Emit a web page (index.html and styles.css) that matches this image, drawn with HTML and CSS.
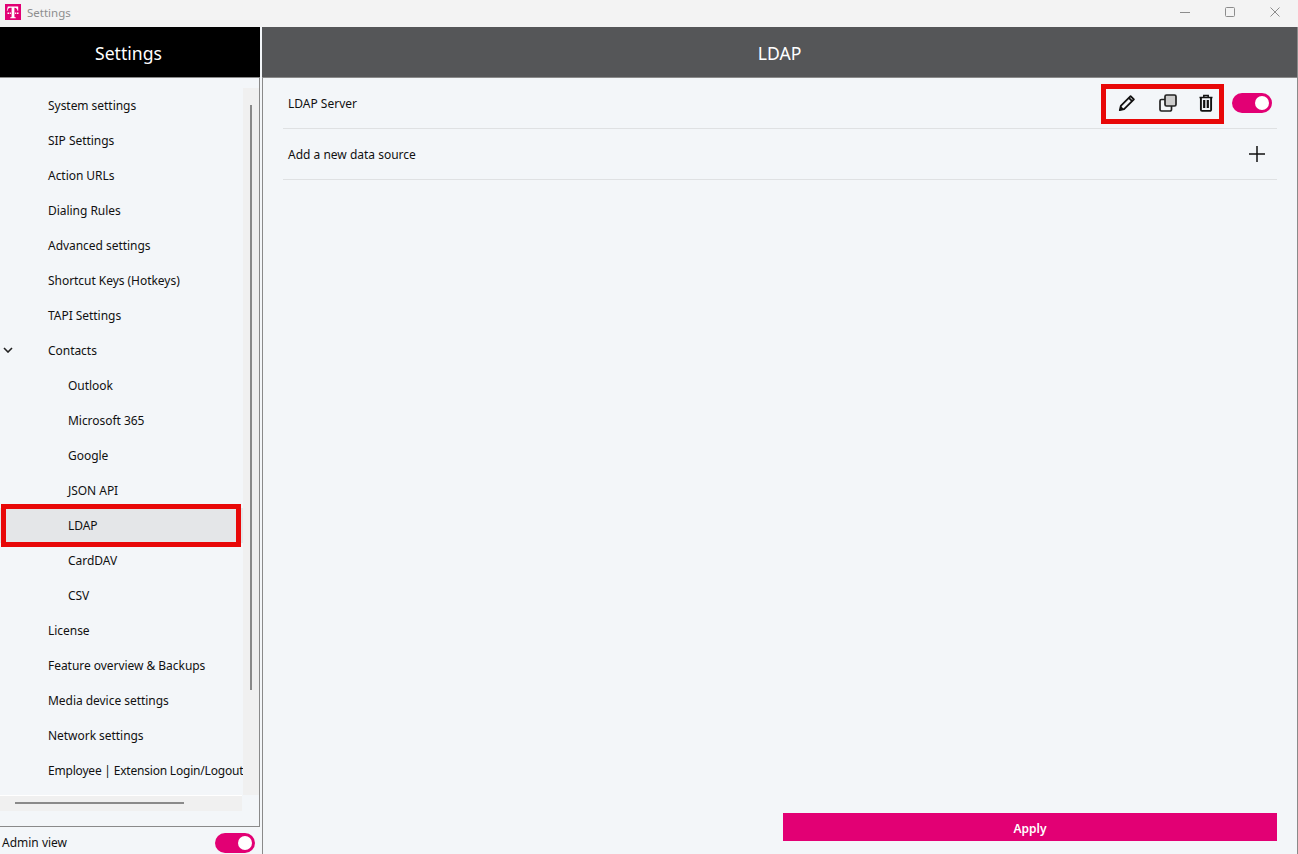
FILE: index.html
```html
<!DOCTYPE html>
<html lang="en">
<head>
<meta charset="utf-8">
<title>Settings</title>
<link rel="stylesheet" href="styles.css">
</head>
<body>
<div class="app">
  <div class="titlebar">
    <div class="logo">
      <svg width="16" height="16" viewBox="0 0 16 16"><rect width="16" height="16" fill="#e20074"/><path d="M2.800 2.500h10.400v4.300h-.8c0-1.700-.9-2.900-2.800-3H9.400v8.400c0 .9.300 1.100 1.300 1.100v.9H5.300v-.9c1 0 1.300-.2 1.300-1.100V3.800H5.400c-1.900.1-2.800 1.300-2.800 3h-.8z" fill="#fff"/><rect x="2.500" y="8.500" width="1.500" height="1.500" fill="#fff"/><rect x="4.700" y="8.500" width="1.200" height="1.500" fill="#fff"/><rect x="10.100" y="8.500" width="1.200" height="1.500" fill="#fff"/><rect x="12" y="8.500" width="1.500" height="1.500" fill="#fff"/></svg>
    </div>
    <span class="app-title">Settings</span>
    <div class="win-controls">
      <svg class="win-btn" width="12" height="12" viewBox="0 0 12 12"><path d="M1 6.500h10" stroke="#8c8c8c" fill="none"/></svg>
      <svg class="win-btn" width="12" height="12" viewBox="0 0 12 12"><rect x="1.500" y="1.500" width="9" height="9" rx="1" stroke="#8c8c8c" fill="none"/></svg>
      <svg class="win-btn" width="12" height="12" viewBox="0 0 12 12"><path d="M1.500 1.500l9 9M10.500 1.500l-9 9" stroke="#8c8c8c" fill="none"/></svg>
    </div>
  </div>
  <div class="content">
    <aside class="sidebar">
      <div class="side-head">Settings</div>
      <div class="side-panel">
        <div class="side-scroll">
          <nav class="nav">
            <div class="nav-item">System settings</div>
            <div class="nav-item">SIP Settings</div>
            <div class="nav-item">Action URLs</div>
            <div class="nav-item">Dialing Rules</div>
            <div class="nav-item">Advanced settings</div>
            <div class="nav-item">Shortcut Keys (Hotkeys)</div>
            <div class="nav-item">TAPI Settings</div>
            <div class="nav-item has-caret">
              <svg class="caret" width="10" height="6" viewBox="0 0 10 6"><path d="M1 1l4 4 4-4" stroke="#222" stroke-width="1.600" fill="none"/></svg>
              Contacts
            </div>
            <div class="nav-item sub">Outlook</div>
            <div class="nav-item sub">Microsoft 365</div>
            <div class="nav-item sub">Google</div>
            <div class="nav-item sub">JSON API</div>
            <div class="nav-item sub active">LDAP<span class="mark mark-nav"></span></div>
            <div class="nav-item sub">CardDAV</div>
            <div class="nav-item sub">CSV</div>
            <div class="nav-item">License</div>
            <div class="nav-item">Feature overview &amp; Backups</div>
            <div class="nav-item">Media device settings</div>
            <div class="nav-item">Network settings</div>
            <div class="nav-item tight">Employee | Extension Login/Logout</div>
          </nav>
          <div class="vtrack"><div class="vthumb"></div></div>
        </div>
        <div class="htrack"><div class="hthumb"></div></div>
      </div>
      <div class="admin">
        <span>Admin view</span>
        <span class="toggle"></span>
      </div>
    </aside>
    <main class="main">
      <div class="main-head">LDAP</div>
      <div class="main-body">
        <div class="row">
          <span>LDAP Server</span>
          <div class="row-actions">
            <div class="icons">
              <svg width="18" height="18" viewBox="0 0 18 18"><path d="M1.800 16.200l1-4.300L12.600 2.100l3.300 3.300-9.800 9.800z" fill="none" stroke="#111" stroke-width="1.800" stroke-linejoin="round"/><path d="M10.800 3.900l3.300 3.300" stroke="#111" stroke-width="1.800" fill="none"/><path d="M1.800 16.200l1-4.300 3.300 3.300z" fill="#111"/></svg>
              <svg width="18" height="18" viewBox="0 0 18 18"><rect x="6" y="1" width="11" height="11" rx="1.500" fill="#ccc" stroke="#222" stroke-width="1.700"/><path d="M6 5.500H2.500A1.500 1.500 0 0 0 1 7v8.500A1.500 1.500 0 0 0 2.500 17H11a1.500 1.500 0 0 0 1.500-1.500V12" fill="none" stroke="#222" stroke-width="1.700"/></svg>
              <svg width="14" height="18" viewBox="0 0 14 18"><path d="M.5 3.500h13M4.800 3.500V1.500h4.400v2" fill="none" stroke="#111" stroke-width="1.500"/><path d="M1.900 3.500v12.200a1.200 1.200 0 0 0 1.200 1.200h7.800a1.200 1.200 0 0 0 1.200-1.200V3.500" fill="none" stroke="#111" stroke-width="1.900"/><path d="M5.200 6v8M8.800 6v8" stroke="#111" stroke-width="2.200" fill="none"/></svg>
              <span class="mark mark-icons"></span>
            </div>
            <span class="toggle"></span>
          </div>
        </div>
        <div class="row">
          <span>Add a new data source</span>
          <svg class="plus" width="18" height="18" viewBox="0 0 18 18"><path d="M9 1v16M1 9h16" stroke="#111" stroke-width="1.500" fill="none"/></svg>
        </div>
        <div class="footer"><button class="apply">Apply</button></div>
      </div>
    </main>
  </div>
</div>
</body>
</html>
```
FILE: styles.css
```css
* { box-sizing: border-box; }
html, body { margin: 0; height: 100%; overflow: hidden; }
body { font-family: "Noto Sans", "Open Sans", sans-serif; font-size: 12px; color: #111; background: #f3f6f9; }
.app { height: 854px; display: flex; flex-direction: column; }
.titlebar { height: 27px; flex: none; background: #f3f3f3; display: flex; align-items: center; padding: 0 0 3px 5px; }
.logo { width: 16px; height: 16px; margin: 0 6px 1px 0; line-height: 0; }
.app-title { color: #8e8e8e; font-size: 11.500px; }
.win-controls { margin-left: auto; display: flex; gap: 33px; padding-right: 17px; }
.win-btn { display: block; }
.content { flex: 1; display: flex; min-height: 0; border-right: 1px solid #8a8a8a; }
.sidebar { width: 260px; flex: none; display: flex; flex-direction: column; margin-right: 2px; }
.side-head { height: 51px; flex: none; background: #000; color: #fff; font-size: 17.600px; display: flex; align-items: center; justify-content: center; padding: 1px 3px 0 0; border-bottom: 1px solid #8a8a8a; }
.side-panel { flex: 1; min-height: 0; display: flex; flex-direction: column; padding-top: 10px; border-right: 1px solid #8a8a8a; border-bottom: 1px solid #8a8a8a; }
.side-scroll { height: 707px; flex: none; display: flex; }
.nav { width: 243px; flex: none; overflow: hidden; letter-spacing: -0.040px; }
.nav-item { height: 35px; display: flex; align-items: center; padding-left: 48px; position: relative; white-space: nowrap; }
.nav-item.sub { padding-left: 68px; }
.nav-item.tight { letter-spacing: -0.200px; }
.nav-item.active { background: #e4e6e8; }
.caret { position: absolute; left: 3px; top: 14px; }
.vtrack { width: 16px; flex: none; background: #f0f0f0; padding-top: 17px; padding-left: 7px; }
.vthumb { width: 2px; height: 585px; background: #8a8a8a; }
.htrack { height: 16px; width: 242px; margin-bottom: 15px; background: #f0f0f0; border-top: 1px solid #fff; padding: 6px 0 0 15px; }
.hthumb { width: 169px; height: 2px; background: #8a8a8a; }
.admin { height: 27px; flex: none; display: flex; align-items: center; justify-content: space-between; padding: 4px 5px 0 2px; }
.toggle { width: 40px; height: 20px; border-radius: 10px; background: #e20074; position: relative; display: block; flex: none; }
.toggle::after { content: ""; position: absolute; right: 3px; top: 3px; width: 14px; height: 14px; border-radius: 50%; background: #fff; }
.main { flex: 1; min-width: 0; display: flex; flex-direction: column; }
.main-head { height: 51px; flex: none; background: #555658; color: #fff; font-size: 17.600px; display: flex; align-items: center; justify-content: center; padding-top: 1px; border-bottom: 1px solid #8a8a8a; }
.main-body { flex: 1; min-height: 0; display: flex; flex-direction: column; padding: 0 20px 13px; border-left: 1px solid #8a8a8a; }
.row { height: 51px; flex: none; display: flex; align-items: center; justify-content: space-between; padding: 0 5px; border-bottom: 1px solid #dfe1e3; }
.row-actions { display: flex; align-items: center; gap: 19px; }
.icons { position: relative; display: flex; align-items: center; justify-content: space-between; width: 95px; }
.plus { margin-right: 6px; }
.mark { position: absolute; border: 5px solid #e80808; pointer-events: none; }
.mark-nav { left: 1px; top: -4px; width: 240px; height: 43px; }
.mark-icons { left: -17px; top: -10px; width: 123px; height: 40px; }
.footer { margin-top: auto; }
.apply { display: block; margin-left: auto; width: 494px; height: 28px; border: 0; background: #e20074; color: #fff; font: 600 12px "Noto Sans", sans-serif; padding: 2px 0 0; }
```
